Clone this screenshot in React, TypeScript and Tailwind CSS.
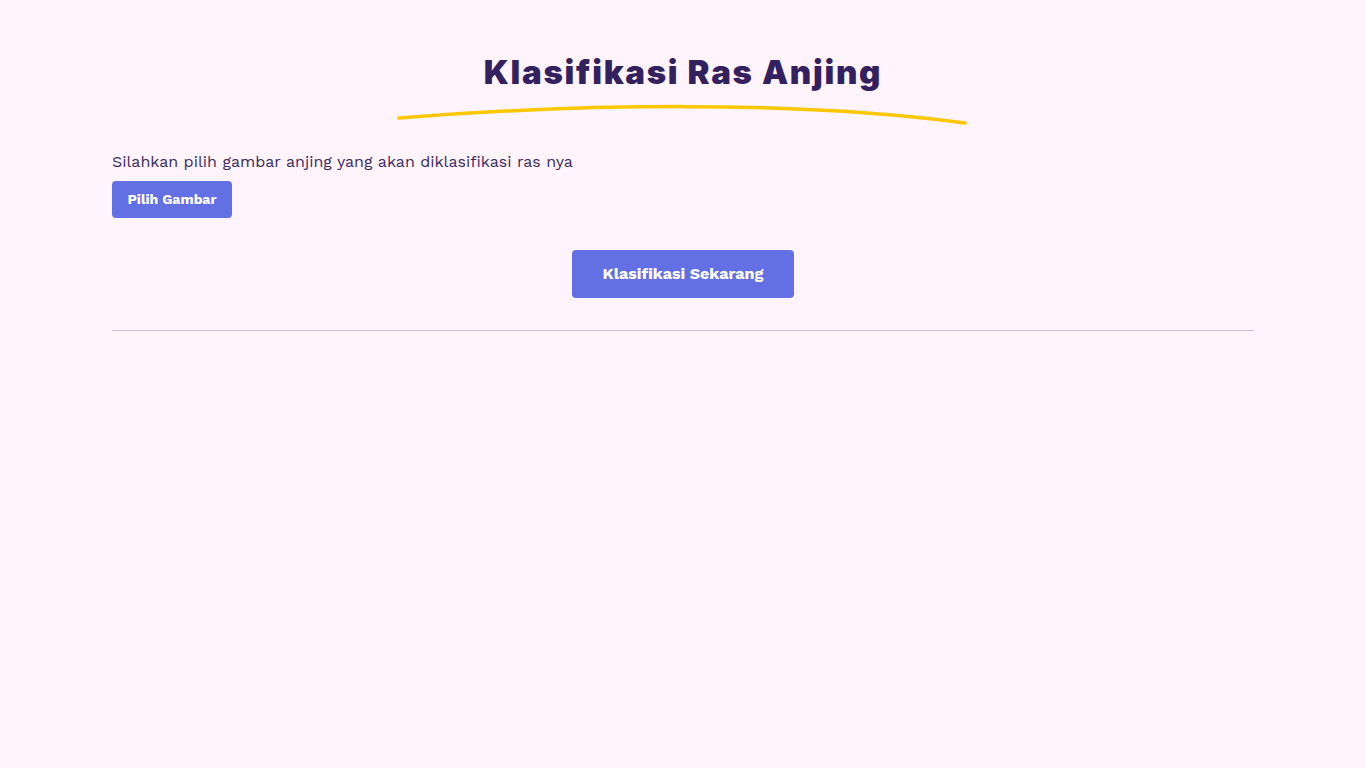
import React from "react";

export default function App() {
  return (
    <div className="min-h-screen w-full bg-[#fff4fc]" style={{ fontFamily: '"Work Sans", "Open Sans", "Noto Sans", sans-serif' }}>
      <div className="mx-[112px] pt-[52px]">
        <div className="flex flex-col items-center">
          <h1
            className="text-[33px] leading-[40px] font-black text-[#33205e] tracking-[1.7px]"
            style={{ fontFamily: 'Inter, "Open Sans", sans-serif' }}
          >
            Klasifikasi Ras Anjing
          </h1>
          <svg width="572" height="24" viewBox="0 0 572 24" className="mt-[10px] ml-[-3px]">
            <path d="M3 16 C 180 2, 400 -2, 569 21" stroke="#ffc700" strokeWidth="3.5" fill="none" strokeLinecap="round" />
          </svg>
        </div>
        <p className="mt-[25px] text-[16px] leading-[22px] text-[#3a2a5c]">
          Silahkan pilih gambar anjing yang akan diklasifikasi ras nya
        </p>
        <button className="mt-[8px] h-[37px] w-[120px] rounded-[4px] bg-[#6370e3] text-[14px] font-bold text-white">
          Pilih Gambar
        </button>
        <div className="mt-[32px] flex justify-center">
          <button className="h-[48px] w-[222px] rounded-[4px] bg-[#6370e3] text-[16px] font-bold text-white">
            Klasifikasi Sekarang
          </button>
        </div>
        <div className="mt-[32px] h-px bg-[#d4bcd8]" />
      </div>
    </div>
  );
}
